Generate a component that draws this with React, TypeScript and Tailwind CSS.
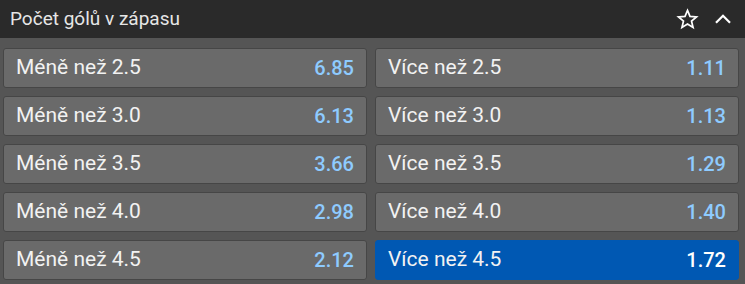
import React from "react";

const rows = [
  ["2.5", "6.85", "1.11"],
  ["3.0", "6.13", "1.13"],
  ["3.5", "3.66", "1.29"],
  ["4.0", "2.98", "1.40"],
  ["4.5", "2.12", "1.72"],
];

function Btn({ label, odd, active }: { label: string; odd: string; active?: boolean }) {
  return (
    <div
      className={
        "flex h-[40px] items-center justify-between rounded-[3px] border pl-[12px] pr-[12px] " +
        (active ? "border-[#0058b3] bg-[#0058b3]" : "border-[#464646] bg-[#6a6a6a]")
      }
    >
      <span className="text-[21px] text-[#f2f2f2]">{label}</span>
      <span className={"text-[20px] font-medium " + (active ? "text-white" : "text-[#8ecbff]")}>{odd}</span>
    </div>
  );
}

export default function App() {
  return (
    <div className="w-[745px] h-[284px] bg-[#555555]" style={{ fontFamily: "Roboto, 'Liberation Sans', sans-serif" }}>
      <div className="flex h-[38px] items-center justify-between bg-[#2a2a2a] pl-[10px] pr-[12px]">
        <span className="text-[19px] text-[#e6e6e6]">Počet gólů v zápasu</span>
        <div className="flex items-center gap-[14px]">
          <svg width="23" height="23" viewBox="0 0 24 24" fill="none" stroke="#ffffff" strokeWidth="1.8" strokeLinejoin="miter">
            <path d="M12 2.5l2.6 6.3 6.8.5-5.2 4.4 1.6 6.6L12 16.7l-5.8 3.6 1.6-6.6-5.2-4.4 6.8-.5z" />
          </svg>
          <svg width="20" height="20" viewBox="0 0 24 24" fill="none" stroke="#ffffff" strokeWidth="2.6" strokeLinecap="square">
            <path d="M4.5 15.5L12 8l7.5 7.5" />
          </svg>
        </div>
      </div>
      <div className="grid grid-cols-2 gap-x-[8px] gap-y-[8px] pl-[3px] pr-[6px] pt-[10px]">
        {rows.map(([n, a, b], i) => (
          <React.Fragment key={n}>
            <Btn label={`Méně než ${n}`} odd={a} />
            <Btn label={`Více než ${n}`} odd={b} active={i === 4} />
          </React.Fragment>
        ))}
      </div>
    </div>
  );
}
